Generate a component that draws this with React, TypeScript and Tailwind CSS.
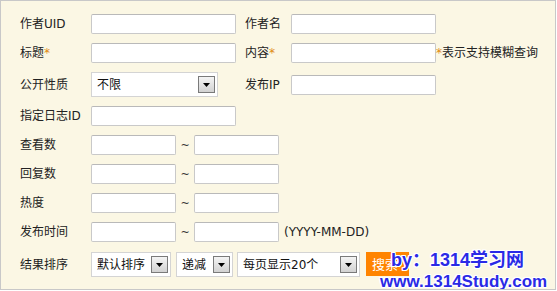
import React from "react";

const font = "font-['DejaVu_Sans','Noto_Sans_CJK_SC',sans-serif]";

function Input({ w }: { w: string }) {
  return (
    <div
      className={`${w} h-[20px] bg-white border border-[#c9c9c9] border-t-[#b9b9b9] rounded-[2px] shrink-0`}
    />
  );
}

function Arrow() {
  return (
    <div className="w-[17px] h-[17px] border border-[#7a7a7a] bg-gradient-to-b from-[#f4f4f4] to-[#d2d2d2] flex items-center justify-center shrink-0">
      <svg width="7" height="4" viewBox="0 0 7 4">
        <polygon points="0,0 7,0 3.5,4" fill="#000" />
      </svg>
    </div>
  );
}

function Select({ w, text }: { w: string; text: string }) {
  return (
    <div
      className={`${w} h-[25px] bg-white border border-[#d4d4d4] flex items-center justify-between pl-[5px] pr-[2px] shrink-0`}
    >
      <span className="text-[12px] text-[#111] leading-none">{text}</span>
      <Arrow />
    </div>
  );
}

function Label({ children, w = "w-[71px]" }: { children: React.ReactNode; w?: string }) {
  return <div className={`${w} shrink-0 text-[12px] text-[#222] leading-none`}>{children}</div>;
}

const Star = () => <span className="text-[#e08a10]">*</span>;

function RangeRow({ label, extra }: { label: string; extra?: string }) {
  return (
    <div className="flex items-center h-[20px]">
      <Label>{label}</Label>
      <Input w="w-[85px]" />
      <div className="w-[18px] text-center text-[11px] text-[#333] leading-none">~</div>
      <Input w="w-[85px]" />
      {extra && <span className="ml-[5px] text-[12px] text-[#222] leading-none">{extra}</span>}
    </div>
  );
}

export default function App() {
  return (
    <div className={`${font} relative w-[556px] h-[290px] bg-[#fbf7e4] border border-[#c8c8c8] pl-[19px] pt-[13px] overflow-hidden`}>
      <div className="flex flex-col">
        <div className="flex items-center h-[20px]">
          <Label>作者UID</Label>
          <Input w="w-[145px]" />
          <div className="w-[9px]" />
          <Label w="w-[46px]">作者名</Label>
          <Input w="w-[145px]" />
        </div>
        <div className="flex items-center h-[20px] mt-[9px]">
          <Label>标题<Star /></Label>
          <Input w="w-[145px]" />
          <div className="w-[9px]" />
          <Label w="w-[46px]">内容<Star /></Label>
          <Input w="w-[145px]" />
          <span className="text-[12px] text-[#222] leading-none">
            <Star />表示支持模糊查询
          </span>
        </div>
        <div className="flex items-center h-[25px] mt-[9px]">
          <Label>公开性质</Label>
          <Select w="w-[127px]" text="不限" />
          <div className="w-[27px]" />
          <Label w="w-[46px]">发布IP</Label>
          <Input w="w-[145px]" />
        </div>
        <div className="flex items-center h-[20px] mt-[9px]">
          <Label>指定日志ID</Label>
          <Input w="w-[145px]" />
        </div>
        <div className="mt-[9px]">
          <RangeRow label="查看数" />
        </div>
        <div className="mt-[9px]">
          <RangeRow label="回复数" />
        </div>
        <div className="mt-[9px]">
          <RangeRow label="热度" />
        </div>
        <div className="mt-[9px]">
          <RangeRow label="发布时间" extra="(YYYY-MM-DD)" />
        </div>
        <div className="flex items-center h-[25px] mt-[10px]">
          <Label>结果排序</Label>
          <Select w="w-[80px]" text="默认排序" />
          <div className="w-[5px]" />
          <Select w="w-[57px]" text="递减" />
          <div className="w-[4px]" />
          <Select w="w-[123px]" text="每页显示20个" />
          <div className="w-[6px]" />
          <div className="w-[43px] h-[24px] -mt-[1px] bg-[#ff8400] text-white text-[13px] flex items-center pl-[6px] leading-none">
            搜索
          </div>
        </div>
      </div>
      <div className="absolute left-[390px] top-[250px] font-['Liberation_Sans','Noto_Sans_CJK_SC',sans-serif] font-bold text-[18px] leading-none text-[#2a2ae6] [text-shadow:1px_0_#fff,-1px_0_#fff,0_1px_#fff,0_-1px_#fff,1px_1px_#fff,-1px_-1px_#fff,1px_-1px_#fff,-1px_1px_#fff] whitespace-nowrap">
        by：1314学习网
      </div>
      <div className="absolute left-[379px] top-[272px] font-['Liberation_Sans',sans-serif] font-bold text-[17px] leading-none text-[#2a2ae6] [text-shadow:1px_0_#fff,-1px_0_#fff,0_1px_#fff,0_-1px_#fff,1px_1px_#fff,-1px_-1px_#fff,1px_-1px_#fff,-1px_1px_#fff] whitespace-nowrap">
        www.1314Study.com
      </div>
    </div>
  );
}
